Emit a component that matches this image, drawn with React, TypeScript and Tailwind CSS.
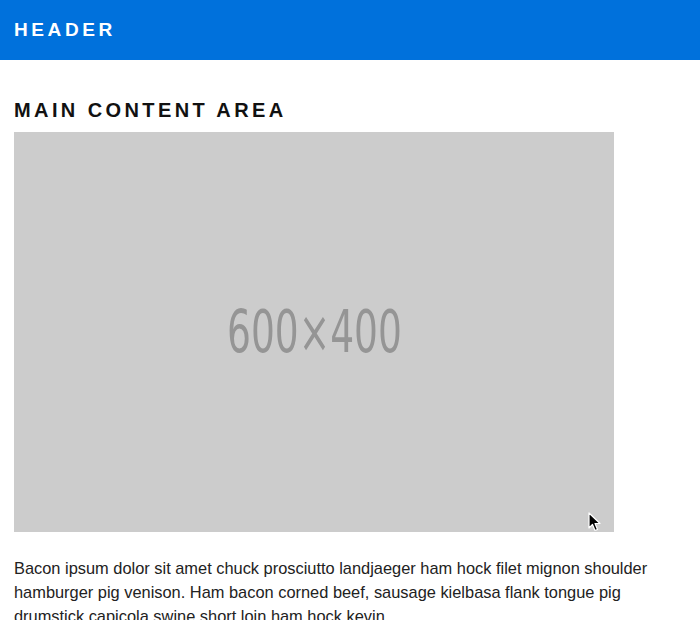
export default function App() {
  return (
    <div className="min-h-screen bg-white font-['Liberation_Sans',Arial,sans-serif] text-[#222]">
      {/* Header bar */}
      <header className="h-[60px] bg-[#0071dc] px-[14px] flex items-center">
        <h1 className="text-[19px] font-bold tracking-[0.19em] text-white uppercase">Header</h1>
      </header>

      <main className="px-[14px] pt-[36px]">
        <h2 className="text-[20px] leading-[28px] font-bold tracking-[0.17em] text-[#111] uppercase">
          Main Content Area
        </h2>
        <div className="relative mt-[8px] w-[600px] h-[400px] bg-[#cccccc] flex items-center justify-center overflow-hidden">
          <span className="text-[58px] text-[#959595] font-['DejaVu_Sans_Condensed','Liberation_Sans_Narrow',sans-serif] scale-x-[0.72] leading-none">
            600×400
          </span>
          {/* mouse pointer */}
          <svg className="absolute left-[574px] top-[380px]" width="14" height="20" viewBox="0 0 14 20">
            <path d="M1 1 L1 16 L4.5 12.5 L7 18.5 L9.5 17.5 L7 11.5 L12 11.5 Z" fill="#000" stroke="#fff" strokeWidth="1.2" strokeLinejoin="round" />
          </svg>
        </div>
        <p className="mt-[24px] text-[16.4px] leading-[24px] max-w-[672px]">
          Bacon ipsum dolor sit amet chuck prosciutto landjaeger ham hock filet mignon shoulder hamburger pig
          venison. Ham bacon corned beef, sausage kielbasa flank tongue pig drumstick capicola swine short loin
          ham hock kevin.
        </p>
      </main>
    </div>
  );
}
